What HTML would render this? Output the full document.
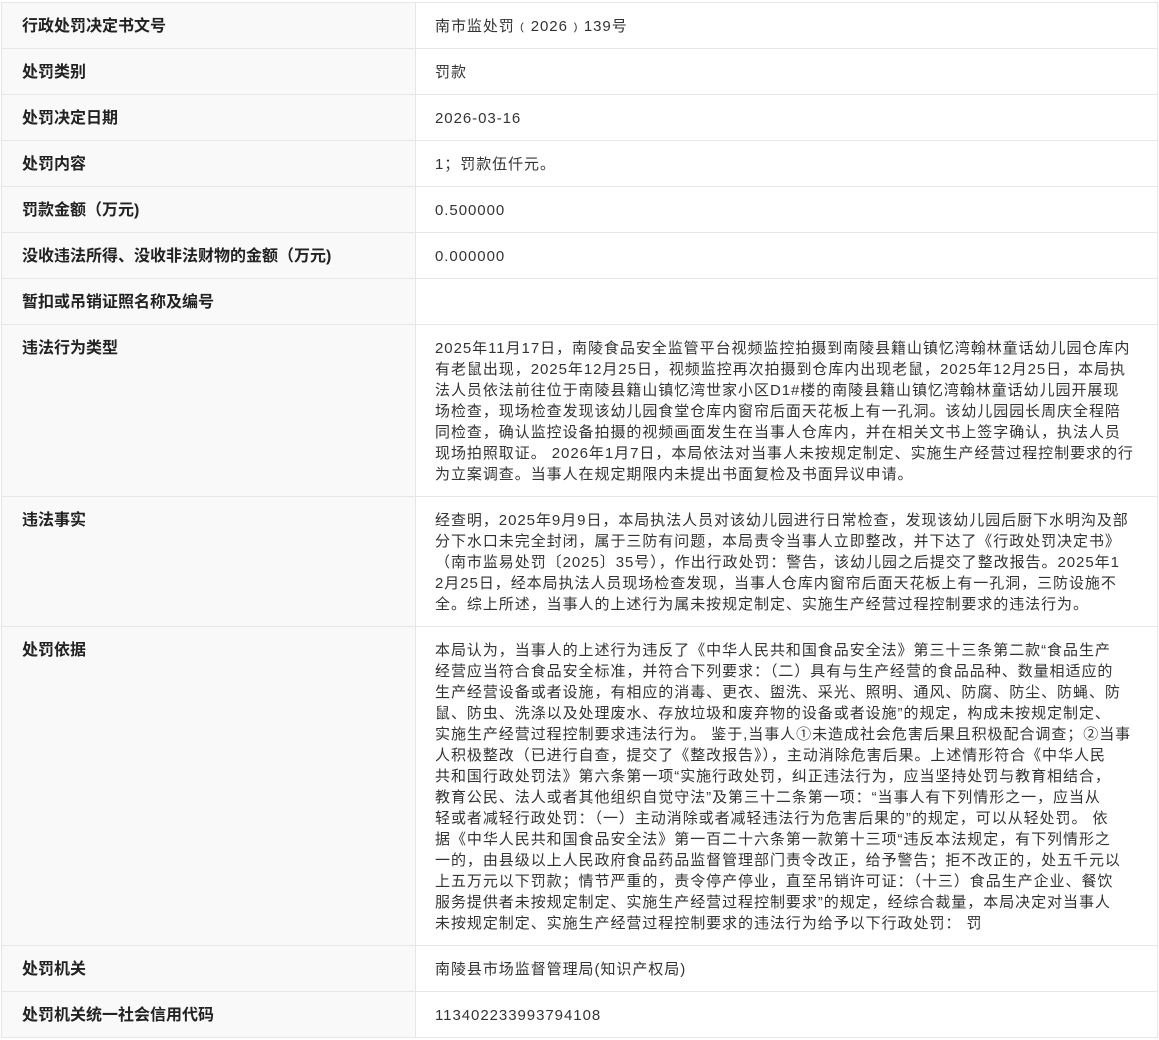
<!DOCTYPE html>
<html><head><meta charset="utf-8"><style>
html,body{margin:0;padding:0;background:#fff;}
body{width:1159px;height:1040px;overflow:hidden;font-family:"Liberation Sans","Noto Sans CJK SC",sans-serif;font-size:15px;color:#333;}
table{border-collapse:collapse;position:absolute;left:1px;top:2px;width:1157px;table-layout:fixed;}
td{border:1px solid #e6e6e6;padding:12px 20px 12px 20px;line-height:21px;vertical-align:top;white-space:nowrap;}
td.k{width:373px;background:#f9f9f9;font-weight:bold;color:#222;font-size:16px;padding-top:13px;padding-bottom:11px;}
td.v{letter-spacing:0.95px;padding-left:19px;padding-top:13px;padding-bottom:11px;}
</style></head><body>
<table>
<tr><td class="k">行政处罚决定书文号</td><td class="v">南市监处罚﹙2026﹚139号</td></tr>
<tr><td class="k">处罚类别</td><td class="v">罚款</td></tr>
<tr><td class="k">处罚决定日期</td><td class="v">2026-03-16</td></tr>
<tr><td class="k">处罚内容</td><td class="v">1；罚款伍仟元。</td></tr>
<tr><td class="k">罚款金额（万元)</td><td class="v">0.500000</td></tr>
<tr><td class="k">没收违法所得、没收非法财物的金额（万元)</td><td class="v">0.000000</td></tr>
<tr><td class="k">暂扣或吊销证照名称及编号</td><td class="v">&nbsp;</td></tr>
<tr><td class="k">违法行为类型</td><td class="v">2025年11月17日，南陵食品安全监管平台视频监控拍摄到南陵县籍山镇忆湾翰林童话幼儿园仓库内<br>有老鼠出现，2025年12月25日，视频监控再次拍摄到仓库内出现老鼠，2025年12月25日，本局执<br>法人员依法前往位于南陵县籍山镇忆湾世家小区D1#楼的南陵县籍山镇忆湾翰林童话幼儿园开展现<br>场检查，现场检查发现该幼儿园食堂仓库内窗帘后面天花板上有一孔洞。该幼儿园园长周庆全程陪<br>同检查，确认监控设备拍摄的视频画面发生在当事人仓库内，并在相关文书上签字确认，执法人员<br>现场拍照取证。 2026年1月7日，本局依法对当事人未按规定制定、实施生产经营过程控制要求的行<br>为立案调查。当事人在规定期限内未提出书面复检及书面异议申请。</td></tr>
<tr><td class="k">违法事实</td><td class="v">经查明，2025年9月9日，本局执法人员对该幼儿园进行日常检查，发现该幼儿园后厨下水明沟及部<br>分下水口未完全封闭，属于三防有问题，本局责令当事人立即整改，并下达了《行政处罚决定书》<br>（南市监易处罚〔2025〕35号），作出行政处罚：警告，该幼儿园之后提交了整改报告。2025年1<br>2月25日，经本局执法人员现场检查发现，当事人仓库内窗帘后面天花板上有一孔洞，三防设施不<br>全。综上所述，当事人的上述行为属未按规定制定、实施生产经营过程控制要求的违法行为。</td></tr>
<tr><td class="k">处罚依据</td><td class="v">本局认为，当事人的上述行为违反了《中华人民共和国食品安全法》第三十三条第二款“食品生产<br>经营应当符合食品安全标准，并符合下列要求：（二）具有与生产经营的食品品种、数量相适应的<br>生产经营设备或者设施，有相应的消毒、更衣、盥洗、采光、照明、通风、防腐、防尘、防蝇、防<br>鼠、防虫、洗涤以及处理废水、存放垃圾和废弃物的设备或者设施”的规定，构成未按规定制定、<br>实施生产经营过程控制要求违法行为。 鉴于,当事人①未造成社会危害后果且积极配合调查；②当事<br>人积极整改（已进行自查，提交了《整改报告》），主动消除危害后果。上述情形符合《中华人民<br>共和国行政处罚法》第六条第一项“实施行政处罚，纠正违法行为，应当坚持处罚与教育相结合，<br>教育公民、法人或者其他组织自觉守法”及第三十二条第一项：“当事人有下列情形之一，应当从<br>轻或者减轻行政处罚：（一）主动消除或者减轻违法行为危害后果的”的规定，可以从轻处罚。 依<br>据《中华人民共和国食品安全法》第一百二十六条第一款第十三项“违反本法规定，有下列情形之<br>一的，由县级以上人民政府食品药品监督管理部门责令改正，给予警告；拒不改正的，处五千元以<br>上五万元以下罚款；情节严重的，责令停产停业，直至吊销许可证：（十三）食品生产企业、餐饮<br>服务提供者未按规定制定、实施生产经营过程控制要求”的规定，经综合裁量，本局决定对当事人<br>未按规定制定、实施生产经营过程控制要求的违法行为给予以下行政处罚： 罚</td></tr>
<tr><td class="k">处罚机关</td><td class="v">南陵县市场监督管理局(知识产权局)</td></tr>
<tr><td class="k">处罚机关统一社会信用代码</td><td class="v">113402233993794108</td></tr>
</table>
</body></html>
